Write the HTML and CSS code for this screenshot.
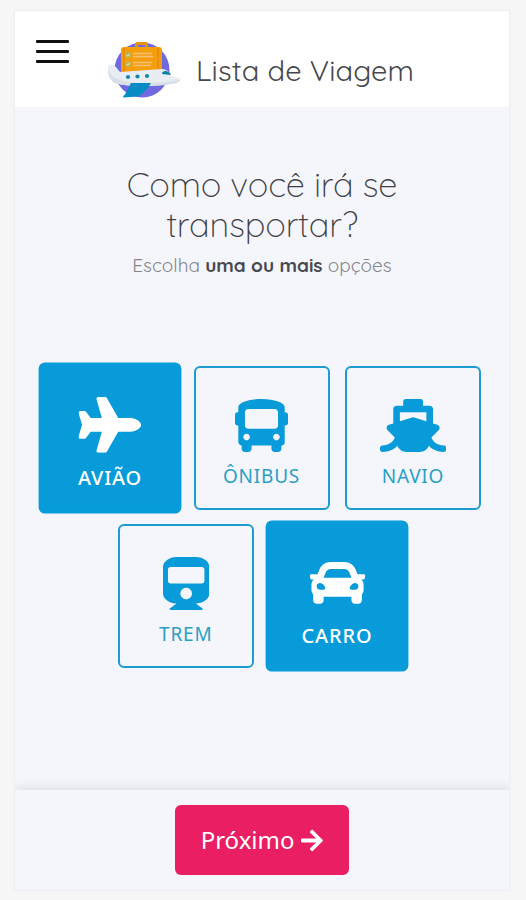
FILE: index.html
```
<!DOCTYPE html>
<html lang="pt-BR">
<head>
    <meta charset="UTF-8">
    <meta name="viewport" content="width=device-width, initial-scale=1.0">
    <title>Lista de Viagem</title>
    <link rel="stylesheet" href="styles.css">
</head>
<body>
    <div class="app">
        <header class="header">
            <button class="menu-btn" aria-label="Menu">
                <span></span>
                <span></span>
                <span></span>
            </button>
            <svg class="logo" viewBox="0 0 74 58">
                <circle cx="35" cy="29" r="27.5" fill="#7069df"/>
                <path d="M28 7V3q0-2 2-2h9q2 0 2 2v4h-3V4h-7v3z" fill="#e8910c"/>
                <rect x="14" y="6" width="41" height="34" rx="3" fill="#f59e0b"/>
                <path d="M17 7v26M51 7v26" stroke="#e58b0b" stroke-width="1.5"/>
                <circle cx="21" cy="14" r="3" fill="#b9b653"/>
                <circle cx="21" cy="23" r="3" fill="#b9b653"/>
                <path d="M19.5 14l1.2 1.3 2-2.4M19.5 23l1.2 1.3 2-2.4" fill="none" stroke="#e9eecb"/>
                <path d="M26 12.5h19M26 15.5h20M26 21.5h19M26 24.5h18" stroke="#f6c078" stroke-width="1.5"/>
                <path d="M1 25q4-3 7 0l5 6 42-3q6 0 9 7l8 2q3 2 0 4-16 4-35 4-24 0-31-4-5-5-5-16z" fill="#e8edf3"/>
                <path d="M1 27q1 6 7 10 10 5 30 5 20 0 35-3-1 3-8 4-12 2-28 2-24 0-31-4-6-5-5-14z" fill="#d9dfe7"/>
                <path d="M55 33q0-3 4-3 4 1 5 4z" fill="#087ea4"/>
                <circle cx="21" cy="36" r="2.1" fill="#1685ad"/>
                <circle cx="30.5" cy="35.5" r="2.1" fill="#1685ad"/>
                <circle cx="40" cy="35" r="2.1" fill="#1685ad"/>
                <path d="M24 42h20q-4 8-13 13.5l-15 1q0-2 2-3z" fill="#078bc4"/>
            </svg>
            <h1 class="brand">Lista de Viagem</h1>
        </header>

        <main class="content">
            <h2 class="title">Como você irá se<br>transportar?</h2>
            <p class="subtitle">Escolha <strong>uma ou mais</strong> opções</p>

            <div class="options">
                <button class="option selected">
                    <svg class="icon" viewBox="0 0 576 512"><path d="M480 192H365.71L260.61 8.06A16.014 16.014 0 0 0 246.71 0h-65.5c-10.63 0-18.3 10.17-15.38 20.39L214.86 192H112l-43.2-57.6c-3.02-4.03-7.77-6.4-12.8-6.4H16.01C5.6 128-2.04 137.78.49 147.88L32 256 .49 364.12C-2.04 374.22 5.6 384 16.01 384H56c5.04 0 9.78-2.37 12.8-6.4L112 320h102.86l-49.03 171.6c-2.92 10.22 4.75 20.4 15.38 20.4h65.5c5.74 0 11.04-3.08 13.89-8.06L365.71 320H480c35.35 0 96-28.65 96-64s-60.65-64-96-64z"/></svg>
                    <span>AVIÃO</span>
                </button>
                <button class="option">
                    <svg class="icon" viewBox="0 0 512 512"><path d="M488 128h-8V80c0-44.8-99.2-80-224-80S32 35.2 32 80v48h-8c-13.25 0-24 10.74-24 24v80c0 13.25 10.75 24 24 24h8v160c0 17.67 14.33 32 32 32v32c0 17.67 14.33 32 32 32h32c17.67 0 32-14.33 32-32v-32h192v32c0 17.67 14.33 32 32 32h32c17.67 0 32-14.33 32-32v-32h6.4c16 0 25.6-12.8 25.6-25.6V256h8c13.25 0 24-10.75 24-24v-80c0-13.26-10.75-24-24-24zM112 400c-17.67 0-32-14.33-32-32s14.33-32 32-32 32 14.33 32 32-14.33 32-32 32zm16-112c-17.67 0-32-14.33-32-32V128c0-17.67 14.33-32 32-32h256c17.67 0 32 14.33 32 32v128c0 17.67-14.33 32-32 32H128zm272 112c-17.67 0-32-14.33-32-32s14.33-32 32-32 32 14.33 32 32-14.33 32-32 32z"/></svg>
                    <span>ÔNIBUS</span>
                </button>
                <button class="option">
                    <svg class="icon" viewBox="0 0 640 512"><path d="M496.616 372.639l70.012-70.012c16.899-16.9 9.942-45.771-12.836-53.092L512 236.102V96c0-17.673-14.327-32-32-32h-64V24c0-13.255-10.745-24-24-24H248c-13.255 0-24 10.745-24 24v40h-64c-17.673 0-32 14.327-32 32v140.102l-41.792 13.433c-22.753 7.313-29.754 36.173-12.836 53.092l70.012 70.012C125.828 416.287 85.587 448 24 448c-13.255 0-24 10.745-24 24v16c0 13.255 10.745 24 24 24 61.023 0 107.499-20.61 143.258-59.396C181.677 487.432 216.021 512 256 512h128c39.979 0 74.323-24.568 88.742-59.396C508.495 491.384 554.968 512 616 512c13.255 0 24-10.745 24-24v-16c0-13.255-10.745-24-24-24-60.817 0-101.542-31.001-119.384-75.361zM192 128h256v87.531l-118.208-37.995a31.995 31.995 0 0 0-19.584 0L192 215.531V128z"/></svg>
                    <span>NAVIO</span>
                </button>
                <button class="option">
                    <svg class="icon" viewBox="0 0 448 512"><path d="M448 96v256c0 51.815-61.624 96-130.022 96l62.98 49.721C386.905 502.417 383.562 512 376 512H72c-7.578 0-10.892-9.594-4.957-14.279L130.022 448C61.82 448 0 403.954 0 352V96C0 42.981 64 0 128 0h192c65 0 128 42.981 128 96zm-48 136V120c0-13.255-10.745-24-24-24H72c-13.255 0-24 10.745-24 24v112c0 13.255 10.745 24 24 24h304c13.255 0 24-10.745 24-24zm-176 64c-30.928 0-56 25.072-56 56s25.072 56 56 56 56-25.072 56-56-25.072-56-56-56z"/></svg>
                    <span>TREM</span>
                </button>
                <button class="option selected">
                    <svg class="icon" viewBox="0 0 512 512"><path d="M499.99 176h-59.87l-16.64-41.6C406.38 91.63 365.57 64 319.5 64h-127c-46.06 0-86.88 27.63-103.99 70.4L71.87 176H12.01C4.2 176-1.53 183.34.37 190.91l6 24C7.7 220.25 12.5 224 18.01 224h20.07C24.65 235.73 16 252.78 16 272v48c0 16.12 6.16 30.67 16 41.93V416c0 17.67 14.33 32 32 32h32c17.67 0 32-14.33 32-32v-32h256v32c0 17.67 14.33 32 32 32h32c17.67 0 32-14.33 32-32v-54.07c9.84-11.25 16-25.8 16-41.93v-48c0-19.22-8.65-36.27-22.07-48H494c5.51 0 10.31-3.75 11.64-9.09l6-24c1.89-7.57-3.84-14.91-11.65-14.91zm-352.06-17.83c7.29-18.22 24.94-30.17 44.57-30.17h127c19.63 0 37.28 11.95 44.57 30.17L384 208H128l19.93-49.83zM96 319.8c-19.2 0-32-12.76-32-31.9S76.8 256 96 256s48 28.71 48 47.85-28.8 15.95-48 15.95zm320 0c-19.2 0-48 3.19-48-15.95S396.8 256 416 256s32 12.76 32 31.9-12.8 31.9-32 31.9z"/></svg>
                    <span>CARRO</span>
                </button>
            </div>
        </main>

        <footer class="footer">
            <button class="next-btn">
                <span>Próximo</span>
                <svg viewBox="0 0 448 512"><path d="M190.5 66.9l22.2-22.2c9.4-9.4 24.6-9.4 33.9 0L441 239c9.4 9.4 9.4 24.6 0 33.9L246.6 467.3c-9.4 9.4-24.6 9.4-33.9 0l-22.2-22.2c-9.5-9.5-9.3-25 .4-34.3L311.4 296H24c-13.3 0-24-10.7-24-24v-32c0-13.3 10.7-24 24-24h287.4L190.9 101.2c-9.8-9.3-10-24.8-.4-34.3z"/></svg>
            </button>
        </footer>
    </div>
</body>
</html>
```
FILE: styles.css
```
* {
    box-sizing: border-box;
}

body {
    margin: 0;
    padding: 11px 17px 10px 15px;
    height: 900px;
    background: #f7f7f7;
    font-family: "Noto Sans", sans-serif;
    overflow: hidden;
}

button {
    font-family: inherit;
    cursor: pointer;
}

.app {
    height: 879px;
    display: flex;
    flex-direction: column;
    background: #f4f6fb;
    box-shadow: 0 0 0 1px #eeeef0, 0 0 8px rgba(0, 0, 0, 0.03);
}

.header {
    height: 96px;
    display: flex;
    align-items: flex-start;
    padding-left: 21px;
    background: #fff;
}

.menu-btn {
    width: 33px;
    margin-top: 29px;
    padding: 0;
    border: none;
    background: none;
    display: flex;
    flex-direction: column;
    gap: 7px;
}

.menu-btn span {
    height: 3px;
    border-radius: 1px;
    background: #111;
}

.logo {
    width: 74px;
    height: 58px;
    margin: 30px 0 0 38px;
}

.brand {
    margin: 40px 0 0 15px;
    font-family: Quicksand, Lato, sans-serif;
    font-size: 29px;
    font-weight: 400;
    line-height: 38px;
    letter-spacing: 0.15px;
    white-space: nowrap;
    color: #48484c;
}

.content {
    flex: 1;
    text-align: center;
    font-family: Quicksand, Lato, sans-serif;
}

.title {
    margin: 57px 0 0;
    font-size: 34.5px;
    font-weight: 300;
    line-height: 40px;
    letter-spacing: -0.2px;
    color: #3f4044;
}

.subtitle {
    margin: 8px 0 0;
    font-size: 19px;
    line-height: 26px;
    color: #85868b;
}

.subtitle strong {
    color: #48494e;
}

.options {
    margin: 88px 1px 0 0;
    display: flex;
    flex-wrap: wrap;
    justify-content: center;
    gap: 14px 15.5px;
}

.option {
    width: 136px;
    height: 144px;
    padding: 31px 0 0;
    display: flex;
    flex-direction: column;
    align-items: center;
    border: 2px solid #1b9bcf;
    border-radius: 6px;
    background: transparent;
    color: #2a9fc4;
    font-family: "Noto Sans", sans-serif;
    font-size: 19px;
    line-height: 26px;
    letter-spacing: 0.8px;
}

.option .icon {
    height: 53px;
    margin-bottom: 11px;
    fill: #079bd9;
}

.option.selected {
    transform: scale(1.05);
    background: #079bd9;
    border-color: #079bd9;
    color: #fff;
    font-weight: 500;
}

.option.selected .icon {
    fill: #fff;
}

.footer {
    height: 100px;
    padding-top: 15px;
    display: flex;
    justify-content: center;
    align-items: flex-start;
    box-shadow: 0 -3px 10px rgba(0, 0, 0, 0.09);
    clip-path: inset(-20px 0 0 0);
}

.next-btn {
    width: 174px;
    height: 70px;
    padding: 0;
    display: flex;
    justify-content: center;
    align-items: center;
    gap: 7px;
    border: none;
    border-radius: 6px;
    background: #e91e63;
    color: #fff;
    font-size: 24px;
}

.next-btn span {
    padding-bottom: 2px;
}

.next-btn svg {
    height: 25px;
    fill: #fff;
}
```
